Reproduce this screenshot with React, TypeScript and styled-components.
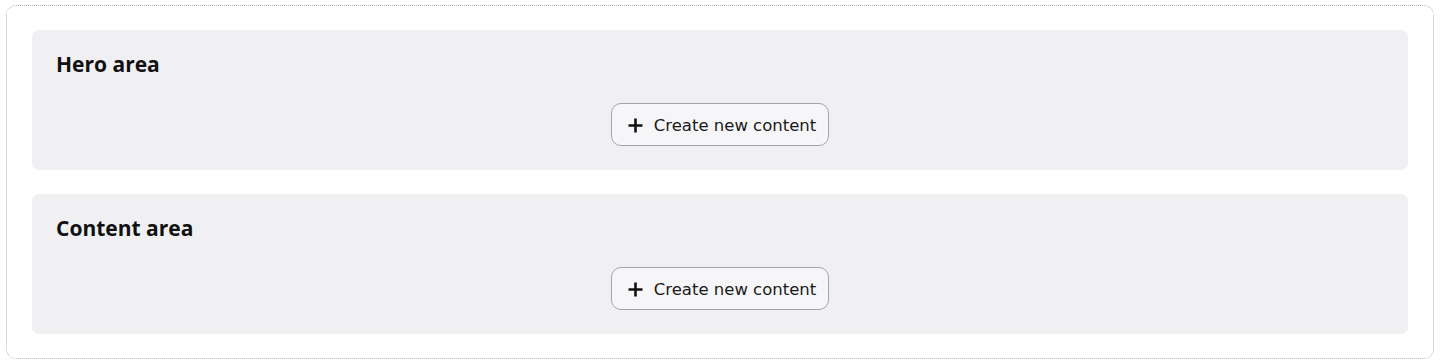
import React from "react";
import styled, { createGlobalStyle } from "styled-components";

const Global = createGlobalStyle`
  html, body { margin: 0; padding: 0; background: #ffffff; }
  body { font-family: "Open Sans", "Noto Sans", sans-serif; color: #000; }
`;

const Frame = styled.div`
  margin: 5px 6px;
  border: 1px dotted #b4b4b8;
  border-radius: 10px;
  padding: 24px 25px;
  display: flex;
  flex-direction: column;
  gap: 24px;
`;

const Region = styled.section`
  background: #f0f0f2;
  border-radius: 7px;
  padding: 24px;
  display: flex;
  flex-direction: column;
  align-items: center;
`;

const Title = styled.h2`
  align-self: stretch;
  margin: 0 0 29px;
  font-family: "Open Sans", "Noto Sans", sans-serif;
  font-weight: 700;
  font-size: 21px;
  line-height: 20px;
  color: #111;
`;

const CreateButton = styled.button`
  display: inline-flex;
  align-items: center;
  gap: 11px;
  height: 43px;
  padding: 1px 12px 0 16px;
  border: 1px solid #a4a4aa;
  border-radius: 10px;
  background: #f6f6f8;
  font-family: "DejaVu Sans", Verdana, sans-serif;
  font-size: 16.5px;
  color: #1a1a1a;
  cursor: pointer;
`;

const PlusIcon = () => (
  <svg width="15" height="15" viewBox="0 0 15 15" aria-hidden="true">
    <path d="M7.5 0.5v14M0.5 7.5h14" stroke="#111" strokeWidth="2.6" />
  </svg>
);

const areas = ["Hero area", "Content area"];

export default function App() {
  return (
    <>
      <Global />
      <Frame>
        {areas.map((a) => (
          <Region key={a}>
            <Title>{a}</Title>
            <CreateButton>
              <PlusIcon />
              Create new content
            </CreateButton>
          </Region>
        ))}
      </Frame>
    </>
  );
}
